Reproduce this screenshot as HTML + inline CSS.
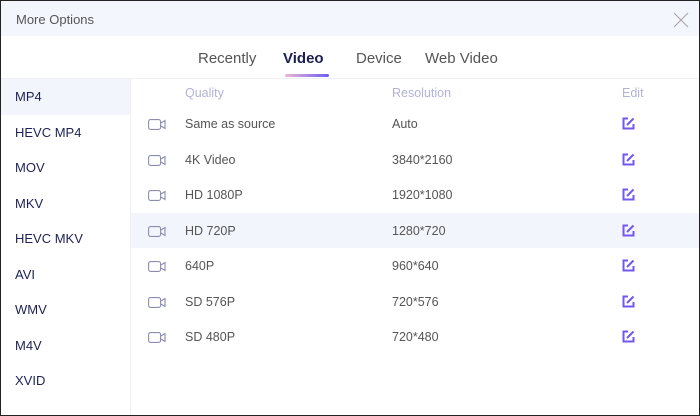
<!DOCTYPE html>
<html><head><style>
*{margin:0;padding:0;box-sizing:border-box}
body{width:700px;height:416px;overflow:hidden;font-family:"Liberation Sans",sans-serif;background:#fff}
.win{position:absolute;left:0;top:0;width:700px;height:416px;border:1px solid #222;background:#fff}
.hdr{position:absolute;left:0;top:0;width:698px;height:35px;background:#f4f6fd}
.hdr span{position:absolute;left:15px;top:11px;font-size:13px;color:#555}
.x{position:absolute;left:672px;top:11px}
.tab{position:absolute;top:49px;font-size:15px;color:#555}
.line{position:absolute;left:0;top:77px;width:698px;height:1px;background:#eef0f6}
.side{position:absolute;left:0;top:78px;width:130px;height:336px;border-right:1px solid #eef0f6}
.side div{height:35.5px;line-height:36px;padding-left:14px;font-size:13px;color:#1e2256}
.side .sel{background:#f3f5fc}
.row{position:absolute;left:130px;width:568px;height:35.5px;font-size:12.5px;color:#555}
.row span{position:absolute;top:11px}
.hl{background:#f3f5fc}
.cam{position:absolute;left:17px;top:13px}
.ed{position:absolute;left:491px;top:11px}
.th{position:absolute;top:85px;font-size:12.5px;color:#b0b3d6}
</style></head><body><div class="win">
<div class="hdr"><span>More Options</span>
<svg class="x" width="16" height="16" viewBox="0 0 16 16"><path d="M1 1L15 15M15 1L1 15" stroke="#aaa" stroke-width="1.2"/></svg></div>
<div class="tab" style="left:197px">Recently</div>
<div class="tab" style="left:282px;color:#1b1f50;font-weight:bold">Video</div>
<div style="position:absolute;left:284px;top:73px;width:44px;height:3px;border-radius:2px;background:linear-gradient(90deg,#eeb8d6,#6a5cf0)"></div>
<div class="tab" style="left:355px">Device</div>
<div class="tab" style="left:424px">Web Video</div>
<div class="line"></div>
<div class="side"><div class="sel">MP4</div><div>HEVC MP4</div><div>MOV</div><div>MKV</div><div>HEVC MKV</div><div>AVI</div><div>WMV</div><div>M4V</div><div>XVID</div></div>
<div class="th" style="left:184px">Quality</div><div class="th" style="left:391px">Resolution</div><div class="th" style="left:621px">Edit</div>
<div class="row" style="top:105px"><svg class="cam" width="19" height="11" viewBox="0 0 19 11"><rect x="0.6" y="0.6" width="12" height="9.8" rx="2" fill="none" stroke="#8a8db0" stroke-width="1.1"/><path d="M13 4L17 1.5V9.5L13 7" fill="none" stroke="#8a8db0" stroke-width="1.1"/></svg><span style="left:54px">Same as source</span><span style="left:261px">Auto</span><svg class="ed" width="13" height="13" viewBox="0 0 13 13"><path d="M6 1.5H1.5V11.5H11.5V7" fill="none" stroke="#7557ee" stroke-width="2"/><path d="M5 8L11.5 1.5" stroke="#7557ee" stroke-width="2"/></svg></div>
<div class="row" style="top:140.5px"><svg class="cam" width="19" height="11" viewBox="0 0 19 11"><rect x="0.6" y="0.6" width="12" height="9.8" rx="2" fill="none" stroke="#8a8db0" stroke-width="1.1"/><path d="M13 4L17 1.5V9.5L13 7" fill="none" stroke="#8a8db0" stroke-width="1.1"/></svg><span style="left:54px">4K Video</span><span style="left:261px">3840*2160</span><svg class="ed" width="13" height="13" viewBox="0 0 13 13"><path d="M6 1.5H1.5V11.5H11.5V7" fill="none" stroke="#7557ee" stroke-width="2"/><path d="M5 8L11.5 1.5" stroke="#7557ee" stroke-width="2"/></svg></div>
<div class="row" style="top:176px"><svg class="cam" width="19" height="11" viewBox="0 0 19 11"><rect x="0.6" y="0.6" width="12" height="9.8" rx="2" fill="none" stroke="#8a8db0" stroke-width="1.1"/><path d="M13 4L17 1.5V9.5L13 7" fill="none" stroke="#8a8db0" stroke-width="1.1"/></svg><span style="left:54px">HD 1080P</span><span style="left:261px">1920*1080</span><svg class="ed" width="13" height="13" viewBox="0 0 13 13"><path d="M6 1.5H1.5V11.5H11.5V7" fill="none" stroke="#7557ee" stroke-width="2"/><path d="M5 8L11.5 1.5" stroke="#7557ee" stroke-width="2"/></svg></div>
<div class="row hl" style="top:211.5px"><svg class="cam" width="19" height="11" viewBox="0 0 19 11"><rect x="0.6" y="0.6" width="12" height="9.8" rx="2" fill="none" stroke="#8a8db0" stroke-width="1.1"/><path d="M13 4L17 1.5V9.5L13 7" fill="none" stroke="#8a8db0" stroke-width="1.1"/></svg><span style="left:54px">HD 720P</span><span style="left:261px">1280*720</span><svg class="ed" width="13" height="13" viewBox="0 0 13 13"><path d="M6 1.5H1.5V11.5H11.5V7" fill="none" stroke="#7557ee" stroke-width="2"/><path d="M5 8L11.5 1.5" stroke="#7557ee" stroke-width="2"/></svg></div>
<div class="row" style="top:247px"><svg class="cam" width="19" height="11" viewBox="0 0 19 11"><rect x="0.6" y="0.6" width="12" height="9.8" rx="2" fill="none" stroke="#8a8db0" stroke-width="1.1"/><path d="M13 4L17 1.5V9.5L13 7" fill="none" stroke="#8a8db0" stroke-width="1.1"/></svg><span style="left:54px">640P</span><span style="left:261px">960*640</span><svg class="ed" width="13" height="13" viewBox="0 0 13 13"><path d="M6 1.5H1.5V11.5H11.5V7" fill="none" stroke="#7557ee" stroke-width="2"/><path d="M5 8L11.5 1.5" stroke="#7557ee" stroke-width="2"/></svg></div>
<div class="row" style="top:282.5px"><svg class="cam" width="19" height="11" viewBox="0 0 19 11"><rect x="0.6" y="0.6" width="12" height="9.8" rx="2" fill="none" stroke="#8a8db0" stroke-width="1.1"/><path d="M13 4L17 1.5V9.5L13 7" fill="none" stroke="#8a8db0" stroke-width="1.1"/></svg><span style="left:54px">SD 576P</span><span style="left:261px">720*576</span><svg class="ed" width="13" height="13" viewBox="0 0 13 13"><path d="M6 1.5H1.5V11.5H11.5V7" fill="none" stroke="#7557ee" stroke-width="2"/><path d="M5 8L11.5 1.5" stroke="#7557ee" stroke-width="2"/></svg></div>
<div class="row" style="top:318px"><svg class="cam" width="19" height="11" viewBox="0 0 19 11"><rect x="0.6" y="0.6" width="12" height="9.8" rx="2" fill="none" stroke="#8a8db0" stroke-width="1.1"/><path d="M13 4L17 1.5V9.5L13 7" fill="none" stroke="#8a8db0" stroke-width="1.1"/></svg><span style="left:54px">SD 480P</span><span style="left:261px">720*480</span><svg class="ed" width="13" height="13" viewBox="0 0 13 13"><path d="M6 1.5H1.5V11.5H11.5V7" fill="none" stroke="#7557ee" stroke-width="2"/><path d="M5 8L11.5 1.5" stroke="#7557ee" stroke-width="2"/></svg></div>
</div></body></html>
